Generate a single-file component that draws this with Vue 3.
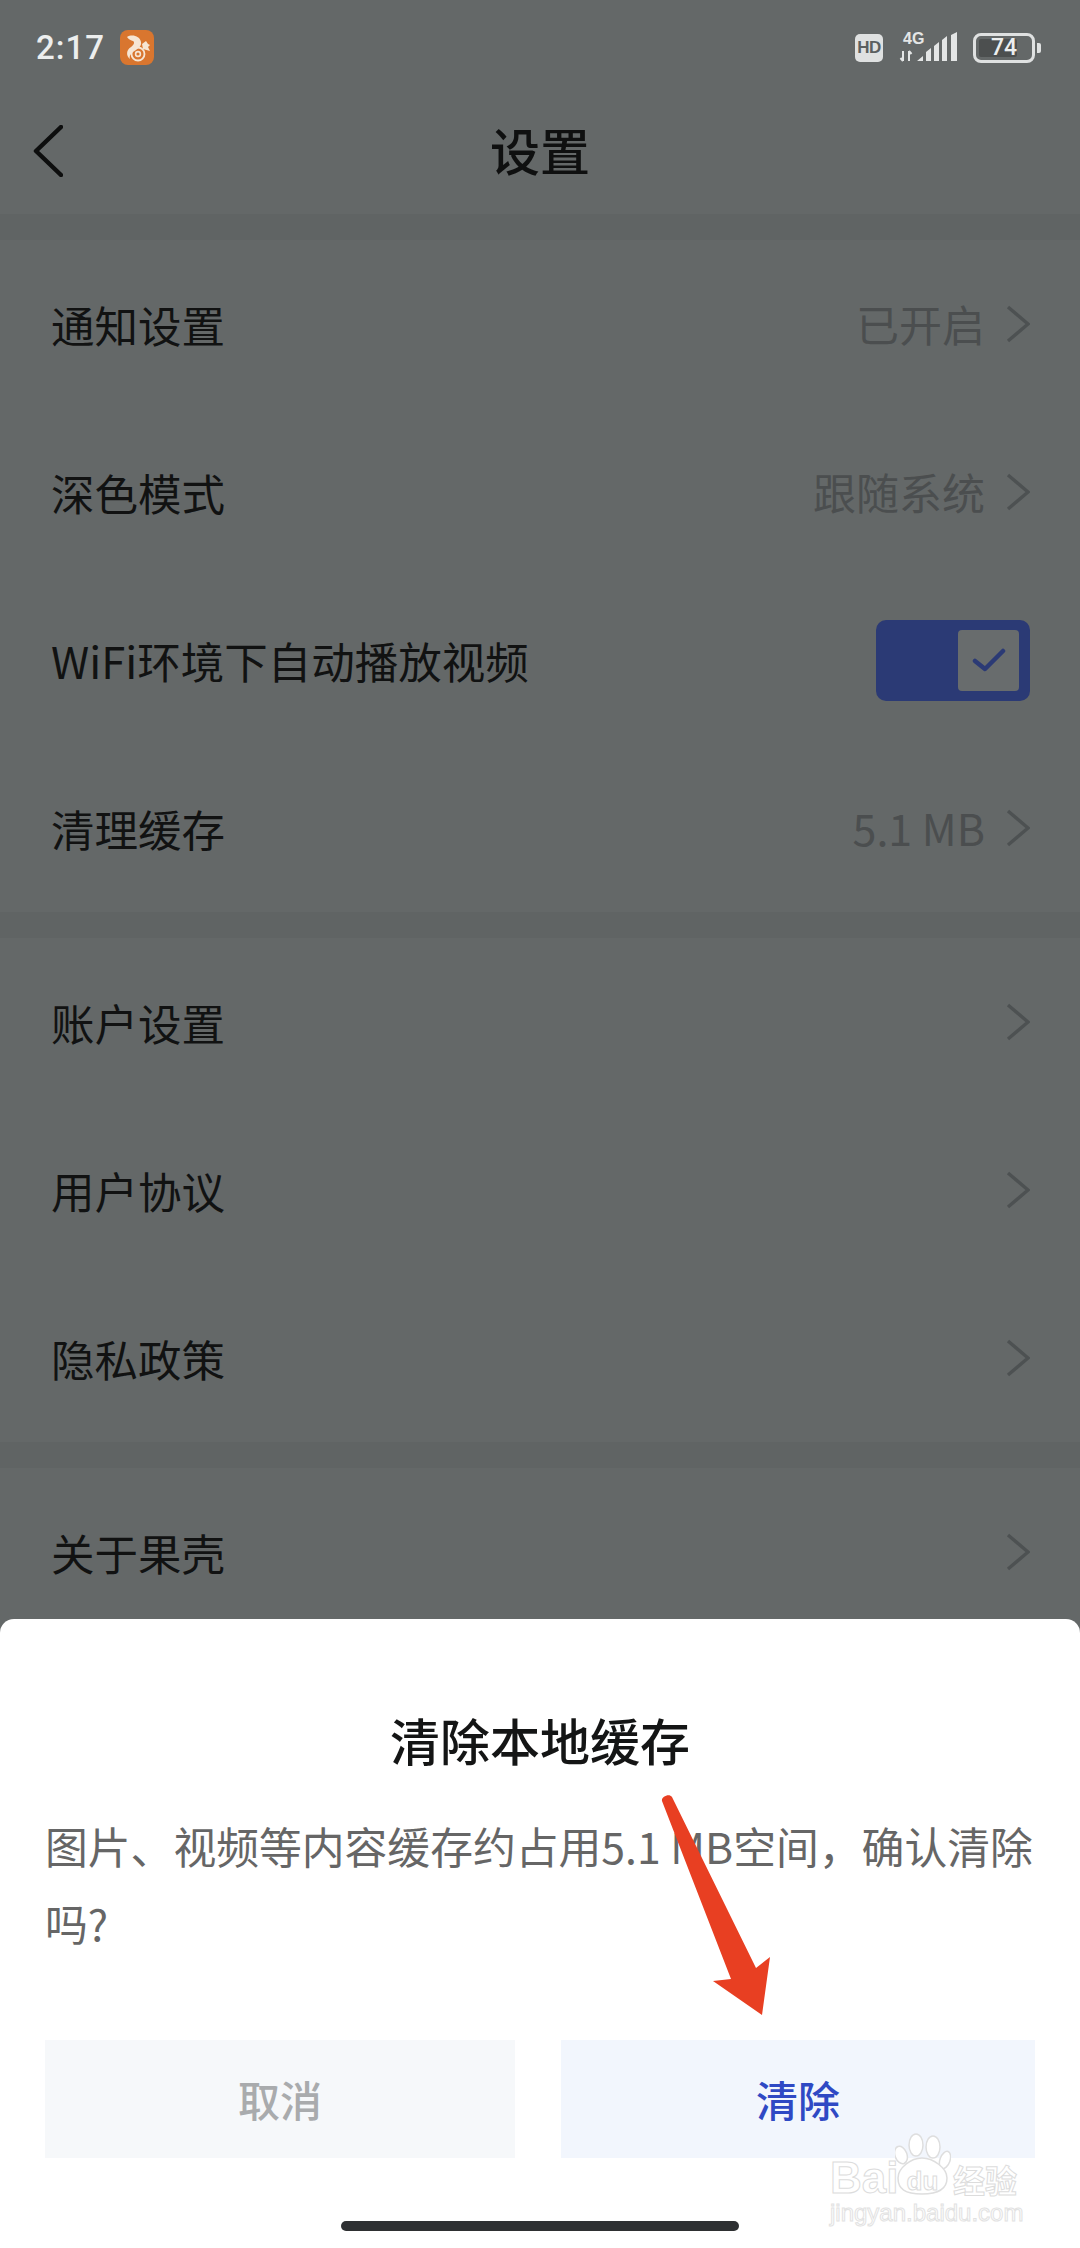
<template>
  <div class="screen">
    <!-- status bar -->
    <div class="status">
      <span class="time">2:17</span>
      <svg class="uc" width="34" height="35" viewBox="0 0 34 35">
        <rect width="34" height="35" rx="8" fill="#d9762f" />
        <path d="M7 7C12 4 20 6 21 12C22 17 17 19 13 22C10 24 9 27 10 29C6 26 6 20 11 17C14 15 15 12 13 11C11 10 9 10 7 7Z" fill="#f6e6d4" />
        <circle cx="18" cy="24" r="6.5" fill="none" stroke="#f6e6d4" stroke-width="1.8" />
        <circle cx="18" cy="24" r="2.4" fill="none" stroke="#f6e6d4" stroke-width="1.6" />
        <path d="M22 14l4-3 2 3 2 1-2 2 2 4-7-2z" fill="#f6e6d4" />
      </svg>
      <div class="status-right">
        <div class="hd">HD</div>
        <svg class="signal" width="60" height="40" viewBox="0 -4 60 40">
          <text x="4" y="12" class="g4">4G</text>
          <path d="M4 19v10M1.500 26l2.500 3M10 29V19M10 19l2.500 3" stroke="#e4e6e6" stroke-width="2" fill="none" />
          <path d="M18 29l6-5v5zM27 29v-9l5-4v13zM35 29V14l5-4v19zM43 29V8l5-4v25zM52 29V3l6-3v29z" fill="#e4e6e6" />
        </svg>
        <div class="battery">
          <div class="battery-fill"></div>
          <span class="battery-num">74</span>
        </div>
        <div class="battery-nub"></div>
      </div>
    </div>

    <!-- nav bar -->
    <div class="nav">
      <svg class="back" width="30" height="52" viewBox="0 0 30 52">
        <path d="M28 2L3 26l25 24" fill="none" stroke="#0d0e0e" stroke-width="4.5" stroke-linecap="round" stroke-linejoin="round" />
      </svg>
      <span class="nav-title">设置</span>
    </div>

    <!-- settings list -->
    <div v-for="(group, i) in groups" :key="i" class="group">
      <div v-for="row in group" :key="row.label" class="row">
        <span class="label">{{ row.label }}</span>
        <div v-if="row.toggle" class="toggle">
          <div class="knob">
            <svg width="34" height="26" viewBox="0 0 34 26">
              <path d="M3 14l10 8L31 4" fill="none" stroke="#2b3a75" stroke-width="4.5" stroke-linecap="round" stroke-linejoin="round" />
            </svg>
          </div>
        </div>
        <div v-else class="right">
          <span v-if="row.value" class="value">{{ row.value }}</span>
          <svg class="chev" width="24" height="38" viewBox="0 0 24 38">
            <path d="M2 2l20 17L2 36" fill="none" stroke="#4d5152" stroke-width="3.4" />
          </svg>
        </div>
      </div>
    </div>

    <!-- bottom sheet -->
    <div class="sheet">
      <h2 class="sheet-title">清除本地缓存</h2>
      <p class="sheet-text">图片、视频等内容缓存约占用5.1 MB空间，确认清除吗?</p>
      <div class="buttons">
        <div class="btn cancel">取消</div>
        <div class="btn confirm">清除</div>
      </div>
      <div class="home-bar"></div>
    </div>

    <!-- red annotation arrow -->
    <svg class="arrow" width="120" height="230" viewBox="660 1792 120 230">
      <path d="M662 1801c-1-4 7-8 10-4l84 171 14-11-8 58-49-34 18-2z" fill="#e83f22" />
    </svg>

    <!-- watermark -->
    <div class="mark">
      <svg class="paw" width="56" height="64" viewBox="0 0 56 64">
        <g fill="#fff" stroke="#dedede" stroke-width="1.5">
          <ellipse cx="6" cy="22" rx="6" ry="9" transform="rotate(-20 6 22)" />
          <ellipse cx="21" cy="12" rx="7" ry="11" />
          <ellipse cx="38" cy="14" rx="7" ry="11" />
          <ellipse cx="50" cy="27" rx="5" ry="9" transform="rotate(20 50 27)" />
          <path d="M3 45C3 35 16 25 27 25C38 25 52 35 52 45C52 56 44 61 27 61C10 61 3 56 3 45Z" />
        </g>
      </svg>
      <span class="mark-bai">Bai</span>
      <span class="mark-du">du</span>
      <span class="mark-cn">经验</span>
      <span class="mark-url">jingyan.baidu.com</span>
    </div>
  </div>
</template>

<script setup>
const groups = [
  [
    { label: '通知设置', value: '已开启' },
    { label: '深色模式', value: '跟随系统' },
    { label: 'WiFi环境下自动播放视频', toggle: true },
    { label: '清理缓存', value: '5.1 MB' }
  ],
  [
    { label: '账户设置' },
    { label: '用户协议' },
    { label: '隐私政策' }
  ],
  [
    { label: '关于果壳' }
  ]
]
</script>

<style>
html, body {
  margin: 0;
  background: #646868;
}
</style>

<style scoped>
.screen {
  position: relative;
  width: 1080px;
  height: 2248px;
  overflow: hidden;
  background: #646868;
  font-family: "Noto Sans CJK SC", "Noto Sans", sans-serif;
}

/* status bar */
.status {
  height: 90px;
  display: flex;
  align-items: center;
  padding: 5px 39px 0 36px;
  box-sizing: border-box;
}

.time {
  font-family: Roboto, sans-serif;
  font-size: 33px;
  font-weight: 500;
  color: #eceeee;
  letter-spacing: 1px;
  margin-right: 15px;
}

.status-right {
  margin-left: auto;
  display: flex;
  align-items: center;
}

.hd {
  width: 28px;
  height: 28px;
  line-height: 28px;
  border-radius: 5px;
  background: #dfe1e1;
  color: #5b5f5f;
  font-family: "Liberation Sans", sans-serif;
  font-size: 17px;
  font-weight: 700;
  letter-spacing: -0.5px;
  text-align: center;
  margin-right: 16px;
}

.g4 {
  font-family: "Liberation Sans", sans-serif;
  font-size: 16px;
  font-weight: 700;
  fill: #e4e6e6;
}

.signal {
  margin-right: 14px;
}

.battery {
  position: relative;
  width: 62px;
  height: 30px;
  border: 3px solid #dfe1e1;
  border-radius: 8px;
  box-sizing: border-box;
}

.battery-fill {
  position: absolute;
  left: 3px;
  top: 3px;
  bottom: 3px;
  width: 38px;
  border-radius: 2px;
  background: #4c4f4f;
}

.battery-num {
  position: absolute;
  left: 0;
  right: 0;
  top: 0;
  line-height: 24px;
  text-align: center;
  font-family: Roboto, sans-serif;
  font-size: 23px;
  font-weight: 500;
  color: #eceeee;
}

.battery-nub {
  width: 4px;
  height: 10px;
  margin-left: 2px;
  background: #dfe1e1;
  border-radius: 0 2px 2px 0;
}

/* nav bar */
.nav {
  position: relative;
  height: 124px;
  display: flex;
  align-items: center;
  justify-content: center;
}

.back {
  position: absolute;
  left: 33px;
  top: 35px;
}

.nav-title {
  font-size: 50px;
  font-weight: 500;
  color: #0f1010;
  margin-bottom: 7px;
}

/* list */
.group {
  border-top: 26px solid #606464;
}

.row {
  height: 168px;
  display: flex;
  align-items: center;
  justify-content: space-between;
  padding: 0 50px 0 51px;
}

.label {
  font-size: 43.5px;
  color: #111212;
}

.right {
  display: flex;
  align-items: center;
}

.value {
  font-size: 43px;
  color: #4b4e4f;
  margin-right: 21px;
  margin-bottom: 2px;
}

.chev {
  display: block;
}

.toggle {
  width: 154px;
  height: 81px;
  padding: 10px 11px 10px 0;
  box-sizing: border-box;
  border-radius: 10px;
  background: #2b3a75;
  display: flex;
  justify-content: flex-end;
}

.knob {
  width: 61px;
  height: 61px;
  border-radius: 4px;
  background: #686c6d;
  display: flex;
  align-items: center;
  justify-content: center;
}

/* sheet */
.sheet {
  position: absolute;
  left: 0;
  right: 0;
  bottom: 0;
  height: 629px;
  box-sizing: border-box;
  padding: 86px 45px 0;
  border-radius: 14px 14px 0 0;
  background: #fff;
}

.sheet-title {
  margin: 0;
  font-size: 50px;
  line-height: 68px;
  font-weight: 500;
  text-align: center;
  color: #141515;
}

.sheet-text {
  margin: 34px 0 0;
  font-size: 42.8px;
  line-height: 77px;
  color: #666;
}

.buttons {
  position: absolute;
  left: 45px;
  right: 45px;
  top: 421px;
  display: grid;
  grid-template-columns: 470px 474px;
  gap: 46px;
}

.btn {
  height: 118px;
  line-height: 118px;
  text-align: center;
  font-size: 42px;
  font-weight: 500;
}

.cancel {
  background: #f6f8fa;
  color: #a9abad;
}

.confirm {
  background: #f2f6fd;
  color: #2f49c4;
}

.home-bar {
  position: absolute;
  left: 341px;
  top: 602px;
  width: 398px;
  height: 10px;
  border-radius: 5px;
  background: #2e3032;
}

/* annotation + watermark sit above the sheet */
.arrow {
  position: absolute;
  left: 660px;
  top: 1792px;
}

.mark {
  position: absolute;
  left: 830px;
  top: 2133px;
  width: 195px;
  height: 92px;
}

.paw {
  position: absolute;
  left: 65px;
  top: 0;
}

.mark-bai,
.mark-du,
.mark-cn,
.mark-url {
  position: absolute;
  color: #fff;
  white-space: nowrap;
}

.mark-bai {
  left: 0;
  top: 25px;
  font-family: "Liberation Sans", sans-serif;
  font-size: 44px;
  line-height: 40px;
  font-weight: 700;
  -webkit-text-stroke: 1px #dcdcdc;
}

.mark-du {
  left: 65px;
  width: 55px;
  top: 33px;
  text-align: center;
  font-family: "Liberation Sans", sans-serif;
  font-size: 26px;
  line-height: 30px;
  font-weight: 700;
  -webkit-text-stroke: 1px #dcdcdc;
}

.mark-cn {
  left: 123px;
  top: 28px;
  font-size: 32px;
  line-height: 36px;
  font-weight: 700;
  -webkit-text-stroke: 1px #dcdcdc;
}

.mark-url {
  left: 0;
  top: 68px;
  font-family: "Liberation Sans", sans-serif;
  font-size: 24px;
  line-height: 24px;
  -webkit-text-stroke: 1px #e2e2e2;
}
</style>
